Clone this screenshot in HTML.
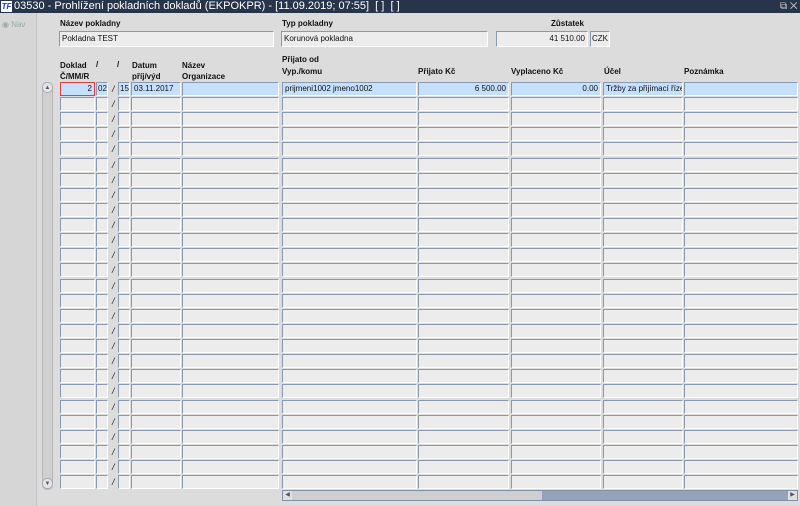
<!DOCTYPE html>
<html><head><meta charset="utf-8"><style>
*{margin:0;padding:0;box-sizing:border-box}
body{width:800px;height:506px;overflow:hidden;background:#dcdcdc;font-family:"Liberation Sans",sans-serif;position:relative}
.a{position:absolute}
.tb{left:0;top:0;width:800px;height:13px;background:#27344a;color:#fff;font-size:11px;line-height:13px;padding-left:14px;white-space:nowrap}
.lp{left:0;top:13px;width:37px;height:493px;background:#d6d6d6;border-right:1px solid #c4c4c4}
.lb{font-size:8px;font-weight:bold;color:#111;white-space:nowrap}
.f{position:absolute;height:14px;background:#ececec;border-top:1px solid #8a98b0;border-left:1px solid #8a98b0;border-right:1px solid #fff;border-bottom:1px solid #fff;font-size:8px;line-height:12px;padding:0 2px;white-space:nowrap;overflow:hidden;color:#111}
.hl{background:#c4e0fb}
.r{text-align:right}
.sl{position:absolute;font-size:9px;color:#222;width:6px;font-style:italic}
</style></head><body>
<div class="a tb">03530 - Prohlížení pokladních dokladů (EKPOKPR) - [11.09.2019; 07:55]&nbsp; [ ]&nbsp; [ ]</div>
<div class="a" style="left:1px;top:1px;width:11px;height:11px;background:#fff;color:#1a3bc0;font-size:8px;font-weight:bold;font-style:italic;line-height:11px;text-align:center">TF</div>
<div class="a" style="left:780px;top:0;color:#ccc;font-size:10px;line-height:13px">⧉ ✕</div>
<div class="a lp"></div>
<div class="a" style="left:2px;top:20px;font-size:8px;color:#9aa">◉ Nav</div>

<div class="a lb" style="left:60px;top:19px">Název pokladny</div>
<div class="f" style="left:59px;top:31px;width:215px;height:16px;line-height:14px">Pokladna TEST</div>
<div class="a lb" style="left:282px;top:19px">Typ pokladny</div>
<div class="f" style="left:281px;top:31px;width:207px;height:16px;line-height:14px">Korunová pokladna</div>
<div class="a lb" style="left:551px;top:19px">Zůstatek</div>
<div class="f r" style="left:496px;top:31px;width:92px;height:16px;line-height:14px">41 510.00</div>
<div class="f" style="left:590px;top:31px;width:20px;height:16px;line-height:14px;padding:0 1px">CZK</div>

<div class="a lb" style="left:60px;top:60px;line-height:11px">Doklad<br>Č/MM/R</div>
<div class="a lb" style="left:96px;top:60px">/</div>
<div class="a lb" style="left:117px;top:60px">/</div>
<div class="a lb" style="left:132px;top:60px;line-height:11px">Datum<br>příj/výd</div>
<div class="a lb" style="left:182px;top:60px;line-height:11px">Název<br>Organizace</div>
<div class="a lb" style="left:282px;top:54px;line-height:12px">Přijato od<br>Vyp./komu</div>
<div class="a lb" style="left:418px;top:67px">Přijato Kč</div>
<div class="a lb" style="left:511px;top:67px">Vyplaceno Kč</div>
<div class="a lb" style="left:604px;top:67px">Účel</div>
<div class="a lb" style="left:684px;top:67px">Poznámka</div>

<div class="a" style="left:42px;top:82px;width:11px;height:408px;background:#d0d0d0;border:1px solid #b8b8b8;border-radius:5px"></div>
<div class="a" style="left:42px;top:82px;width:11px;height:11px;font-size:6px;color:#556;text-align:center;line-height:11px;border:1px solid #aab;border-radius:5px;background:#e4e4e4">▲</div>
<div class="a" style="left:42px;top:478px;width:11px;height:11px;font-size:6px;color:#556;text-align:center;line-height:11px;border:1px solid #aab;border-radius:5px;background:#e4e4e4">▼</div>

<div id="g"></div>
<div class="f hl r" style="left:60px;top:82px;width:35px;border:1px solid #e04040">2</div>
<div class="f hl" style="left:96px;top:82px;width:12px;padding:0 1px">02</div>
<div class="f hl" style="left:118px;top:82px;width:12px;padding:0 1px">15</div>
<div class="f hl" style="left:131px;top:82px;width:50px">03.11.2017</div>
<div class="f hl" style="left:182px;top:82px;width:97px"></div>
<div class="f hl" style="left:282px;top:82px;width:135px">prijmeni1002 jmeno1002</div>
<div class="f hl r" style="left:418px;top:82px;width:91px">6 500.00</div>
<div class="f hl r" style="left:511px;top:82px;width:90px">0.00</div>
<div class="f hl" style="left:603px;top:82px;width:80px">Tržby za přijímací řízení</div>
<div class="f hl" style="left:684px;top:82px;width:114px"></div>

<div class="a" style="left:282px;top:490px;width:516px;height:11px;background:#94a3b8;border:1px solid #8090a8"></div>
<div class="a" style="left:283px;top:491px;width:259px;height:9px;background:#cfcfcf"></div>
<div class="a" style="left:283px;top:491px;width:9px;height:9px;background:#e0e0e0;font-size:6px;line-height:9px;text-align:center;color:#556">◀</div>
<div class="a" style="left:788px;top:491px;width:9px;height:9px;background:#e0e0e0;font-size:6px;line-height:9px;text-align:center;color:#556">▶</div>
<script>
var cols=[[60,35],[96,12],[118,12],[131,50],[182,97],[282,135],[418,91],[511,90],[603,80],[684,114]];
var h='';
for(var i=0;i<27;i++){var y=Math.round(82+i*15.12);
if(i>0)for(var c=0;c<cols.length;c++)h+='<div class="f" style="left:'+cols[c][0]+'px;top:'+y+'px;width:'+cols[c][1]+'px"></div>';
h+='<div class="sl" style="left:112px;top:'+(y+2)+'px">/</div>';}
document.getElementById('g').innerHTML=h;
</script>
</body></html>
